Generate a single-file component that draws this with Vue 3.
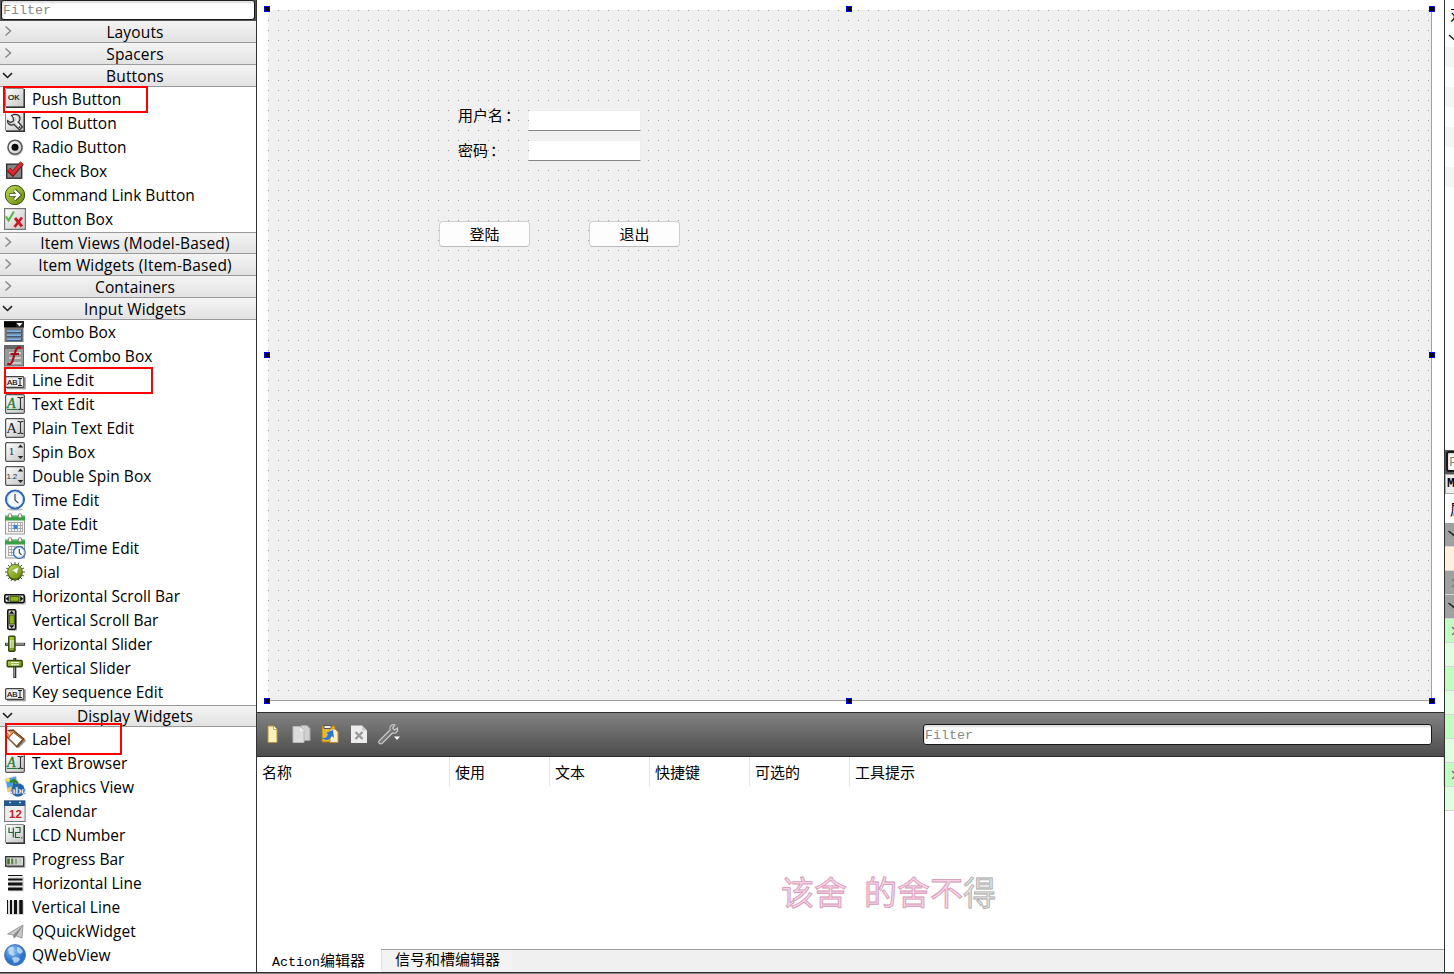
<script setup>
const tile = (inner) =>
  `<rect x="1.5" y=".5" width="18.5" height="18.5" rx="1" fill="url(#metal)" stroke="#8b8b8b"/><path d="M2 19.3H20.3V1" fill="none" stroke="#333" stroke-width="1.4"/>${inner}`
const frame = (inner) =>
  `<rect x="1.6" y="1.6" width="18.8" height="18.8" rx="1.5" fill="url(#metal)" stroke="#555" stroke-width="1.2"/>${inner}`
const t = (x, y, size, s, fill = '#111', extra = '') =>
  `<text x="${x}" y="${y}" font-size="${size}" fill="${fill}" ${extra}>${s}</text>`
const serif = 'font-family="Liberation Serif, serif"'
const beam = '<path d="M13.5 4.5h2l1 1 1-1h2M16.5 5.5v10M13.5 16.5h2l1-1 1 1h2" fill="none" stroke="#333" stroke-width="1.1"/>'
const arrows = '<path d="M16.5 3.5l2.7 3h-5.4zM16.5 18l2.7-3h-5.4z" fill="#222"/>'
const abi = `<path d="M3 19.5h18v-11" fill="none" stroke="#999" stroke-width="1.5"/><rect x="1.6" y="7.6" width="18.2" height="10.8" rx="1" fill="#eee" stroke="#444" stroke-width="1.2"/><text x="3" y="16" font-size="8" fill="#111" stroke="#111" stroke-width=".2" textLength="10.5" lengthAdjust="spacingAndGlyphs">AB</text><path d="M14 9.5h4M16 9.5v7M14 16.5h4" stroke="#222" fill="none"/>`
const calendar = `<rect x="1.5" y="3.5" width="19" height="17.5" fill="#f4f4f4" stroke="#999"/><path d="M1 2.5h20v5H1z" fill="#39a044"/><path d="M1 3h20" stroke="#7fd17f"/><rect x="4.5" y=".7" width="3" height="4" rx="1" fill="#eee" stroke="#888"/><rect x="14.5" y=".7" width="3" height="4" rx="1" fill="#eee" stroke="#888"/><path d="M4 9.5h15M4 12.5h15M4 15.5h15M4 18.5h15M4.5 9v10M7.5 9v10M10.5 9v10M13.5 9v10M16.5 9v10M18.5 9v10" stroke="#a5a5a5" stroke-width=".9"/>`
const clock = (cx, cy, r) =>
  `<circle cx="${cx}" cy="${cy}" r="${r}" fill="#f7fbff" stroke="#2f67b2" stroke-width="${r / 4.2}"/><circle cx="${cx}" cy="${cy}" r="${r * 0.84}" fill="none" stroke="#b9cfe8" stroke-width="1"/><path d="M${cx} ${cy - r * 0.6}v${r * 0.65}l${r * 0.38} ${r * 0.35}" fill="none" stroke="#444" stroke-width="1.2"/>`
const richText = frame(t(3, 14.5, 14, 'A', '#247a2f', serif + ' font-style="italic" stroke="#247a2f" stroke-width=".3"') + '<path d="M3 16.5h10" stroke="#247a2f"/>' + beam)

const icons = {
  push: tile(t(4, 11.5, 7, 'OK', '#111', 'stroke="#111" stroke-width=".2" textLength="11.5" lengthAdjust="spacingAndGlyphs"')),
  tool: tile('<path d="M7.5 3.5c4-2.5 9-.5 8.5 3.5-.2 1.5-1 2.400-1.700 3l4.200 5-3 3-5.500-5.500c-3.500 1.500-7-.5-6.500-4l3 2 3-1.500-.3-3.500z" fill="#ccc" stroke="#333" stroke-width="1.2"/><path d="M9 4.500c3-.5 5 1 4 4l-1.500 1.500 4 4.500" fill="none" stroke="#f8f8f8" stroke-width="1.4"/><circle cx="15.5" cy="15.2" r=".9" fill="#333"/>'),
  radio: '<circle cx="11.3" cy="12" r="8" fill="#999" opacity=".5"/><circle cx="11" cy="11.3" r="7" fill="url(#metal)" stroke="#5a5a5a" stroke-width="1.5"/><circle cx="11" cy="11.3" r="3.5" fill="#080808"/>',
  check: '<rect x="2.7" y="4.2" width="15" height="14" fill="#858585" stroke="#333" stroke-width="1.4"/><path d="M4.5 9.5l4.3 4.3L18 3" fill="none" stroke="#761116" stroke-width="4.6"/><path d="M4.8 9.3l4 4L18 2.8" fill="none" stroke="#e2292f" stroke-width="3"/>',
  command: '<circle cx="11" cy="11" r="9.7" fill="url(#green)" stroke="#395209"/><path d="M5.5 11h9M10.5 6.5l4.7 4.5-4.7 4.5" fill="none" stroke="#31480a" stroke-width="4"/><path d="M5.8 11h9M10.5 6.5l4.7 4.5-4.7 4.5" fill="none" stroke="#fff" stroke-width="2.3"/>',
  box: '<rect x=".6" y=".6" width="20.8" height="20.8" fill="url(#metal)" stroke="#777" stroke-width="1.2"/><path d="M2 8.5l2.5 4L10 3.5" fill="none" stroke="#55b947" stroke-width="2.2"/><path d="M11 10l7 8.5M18 9.5l-7.5 9.5" stroke="#c61c24" stroke-width="2.8"/>',
  combo: '<rect x=".5" y=".5" width="19" height="20.5" fill="#777"/><path d="M0 0h20v6.5H0z" fill="#222"/><path d="M0 1h12v5H0z" fill="#050505"/><path d="M12.5 2h6L15.5 5.6z" fill="#fff"/><path d="M3 10.5h15M3 14.5h15M3 18.5h15" stroke="#245286" stroke-width="2.4"/><path d="M3 10.2h14M3 14.2h14M3 18.2h14" stroke="#83b2e1" stroke-width="1.8"/>',
  font: '<rect x=".5" y=".5" width="19" height="20.5" fill="#999" stroke="#666"/><path d="M0 0h20v4H0z" fill="#666"/><path d="M5 8h12M5 13h12M5 18h12" stroke="#ccc" stroke-width="2"/><path d="M17 3.5c-3-2.500-5 0-6 4L8.500 16c-1 3-3 4-5 2.500M6.500 9h8.500" fill="none" stroke="#a60f17" stroke-width="2.2"/>',
  line: abi,
  rich: richText,
  plain: frame(t(2.3, 16, 15, 'A', '#222', serif) + beam),
  spin: frame(t(4.5, 13.5, 10, '1', '#333', 'font-family="DejaVu Serif, serif"') + arrows),
  double: frame(t(2.6, 13.5, 8, '1.2', '#333', 'textLength="10.5"') + arrows),
  time: '<ellipse cx="11" cy="20.5" rx="8" ry="1" fill="#bbb"/>' + clock(11, 10.5, 9),
  date: calendar + '<rect x="9.5" y="12" width="4" height="4" fill="#3684dd"/>',
  datetime: calendar + clock(15.3, 15.5, 5.8),
  dial: '<path d="M11 1v19.5M1 11h20M4 4l14 14M18 4L4 18M7 1.5l8 18M2 7l18 8M15 1.5L7 20M2 15l18-8" stroke="#555" stroke-width="1"/><circle cx="11" cy="12" r="7.5" fill="#365206"/><circle cx="11" cy="10.7" r="7.3" fill="url(#green)" stroke="#56770d"/><path d="M14.8 6l-2 7-2.2-2.2-3-1.4z" fill="#fff" stroke="#8ca94a" stroke-width=".5"/>',
  hscroll: '<path d="M2 19h19.5v-8" fill="none" stroke="#bbb"/><rect x=".8" y="9.8" width="19.4" height="7.8" rx="1" fill="#ddd" stroke="#111" stroke-width="1.6"/><rect x="6" y="11.3" width="9" height="5" fill="#92b51f" stroke="#385009"/><path d="M4.8 11v5.4l-3-2.7zM16.2 11v5.4l3-2.7z" fill="#111"/>',
  vscroll: '<path d="M5 21.5h7.5V2" fill="none" stroke="#bbb"/><rect x="3.8" y=".8" width="7.8" height="19.4" rx="1" fill="#ddd" stroke="#111" stroke-width="1.6"/><rect x="5.3" y="6" width="5" height="9" fill="#92b51f" stroke="#385009"/><path d="M5 4.8h5.4L7.7 1.8zM5 16.2h5.4L7.7 19.2z" fill="#111"/>',
  hslider: '<path d="M1 11.3h20" stroke="#333" stroke-width="3"/><path d="M2 11h18" stroke="#bbb" stroke-width="1.2"/><rect x="4.7" y="3.2" width="6.3" height="15" rx="1" fill="url(#green)" stroke="#33480b" stroke-width="1.4"/><path d="M6.8 7v8M9 7v8" stroke="#fff"/>',
  vslider: '<path d="M10.8 1v20" stroke="#333" stroke-width="3"/><path d="M10.5 2v18" stroke="#999"/><rect x="3.2" y="3.5" width="15" height="6.3" rx="1" fill="url(#green)" stroke="#33480b" stroke-width="1.4"/><path d="M7 5.6h8M7 7.8h8" stroke="#fff"/>',
  label: '<path d="M14 19.5l7.5-7.5" stroke="#999" stroke-width="2"/><path d="M2 3l7-1 11 9-7 8-11-11z" fill="#df9452" stroke="#6b4018" stroke-width="1.3"/><path d="M9.5 4.5l9 7-6 6.5-8-8z" fill="#fff" stroke="#7b4a1e"/><path d="M2 2l4 4" stroke="#fff" stroke-width="1.5"/>',
  graphics: '<path d="M1 3l11-3 3 12-11 4z" fill="#4d9de8" stroke="#ddd"/><path d="M3 12l11-3 1 4-11 3z" fill="#e4cf68"/><circle cx="4" cy="4" r="2" fill="#f4e33a"/><path d="M10 4v8M6 6l4-2 4 3" fill="none" stroke="#318321" stroke-width="2"/><circle cx="14" cy="14" r="6.8" fill="#2563a8"/>' + t(6, 18, 11, 'abc', '#fff', serif + ' font-weight="700" stroke="#577ba4" stroke-width=".3" textLength="16"'),
  cal: '<rect x=".6" y="1" width="20.5" height="20.5" fill="#eee" stroke="#777"/><path d="M0 .5h21v5.5H0z" fill="#24588c"/><path d="M5 2.5h2M15 2.5h2" stroke="#a8d6f5" stroke-width="1.5"/>' + t(5, 17.5, 11.5, '12', '#c32128', 'font-weight="700"'),
  lcd: tile('<path d="M5 3.5v5h4M9.3 3.5v10M11.5 3.5h4.5v5h-4.5v5H16" fill="none" stroke="#27602c" stroke-width="1.2"/><path d="M17 13.8h1.5" stroke="#27602c"/>'),
  progress: '<path d="M3 19.5h18v-10" fill="none" stroke="#bbb"/><rect x="1.7" y="8.7" width="18" height="9.5" fill="#ddd" stroke="#333" stroke-width="1.4"/><path d="M4.5 10.5v6" stroke="#416d21" stroke-width="2.5"/><path d="M8.2 10.5v6" stroke="#688851" stroke-width="2.5"/><path d="M12 10.5v6" stroke="#93a588" stroke-width="2.5"/><path d="M16 10.5v6" stroke="#bcc7b6" stroke-width="2.5"/>',
  hline: '<path d="M5 4.5h15v15H5z" fill="#ddd"/><path d="M4 3.5h14.5" stroke="#111"/><path d="M4 7.5h14.5" stroke="#111" stroke-width="2"/><path d="M4 12h14.5" stroke="#111" stroke-width="3"/><path d="M4 17h14.5" stroke="#111" stroke-width="3"/>',
  vline: '<path d="M4 5h16v14H4z" fill="#ddd"/><path d="M3.5 4v14" stroke="#111"/><path d="M7 4v14" stroke="#111" stroke-width="2"/><path d="M11.5 4v14" stroke="#111" stroke-width="3"/><path d="M17 4v14" stroke="#111" stroke-width="3.5"/>',
  quick: '<path d="M3.5 14L19 5l-1 13-5.5-2-2.5 2-.5-3z" fill="#c8c8c8" stroke="#8a8a8a" stroke-width=".8"/><path d="M19 5L9.5 15l.5 3 2.5-2z" fill="#8a8a8a"/>',
  web: '<circle cx="11" cy="11" r="10.5" fill="url(#globe)" stroke="#3c6aa7" stroke-width=".8"/><path d="M4 5c2-2.500 5-3 6-1l-1 4 2 2-2 2-4-2zM13 3c3 0 5 2 6 5l-3 2-3-2zM8 14c3-2 7-1 8 1-1 3-4 4-6 4z" fill="#c4e2fb" opacity=".8"/>',
}

const groups = [
  { name: 'Layouts', items: [] },
  { name: 'Spacers', items: [] },
  { name: 'Buttons', items: [['push', 'Push Button'], ['tool', 'Tool Button'], ['radio', 'Radio Button'], ['check', 'Check Box'], ['command', 'Command Link Button'], ['box', 'Button Box']] },
  { name: 'Item Views (Model-Based)', items: [] },
  { name: 'Item Widgets (Item-Based)', items: [] },
  { name: 'Containers', items: [] },
  { name: 'Input Widgets', items: [['combo', 'Combo Box'], ['font', 'Font Combo Box'], ['line', 'Line Edit'], ['rich', 'Text Edit'], ['plain', 'Plain Text Edit'], ['spin', 'Spin Box'], ['double', 'Double Spin Box'], ['time', 'Time Edit'], ['date', 'Date Edit'], ['datetime', 'Date/Time Edit'], ['dial', 'Dial'], ['hscroll', 'Horizontal Scroll Bar'], ['vscroll', 'Vertical Scroll Bar'], ['hslider', 'Horizontal Slider'], ['vslider', 'Vertical Slider'], ['line', 'Key sequence Edit']] },
  { name: 'Display Widgets', items: [['label', 'Label'], ['rich', 'Text Browser'], ['graphics', 'Graphics View'], ['cal', 'Calendar'], ['lcd', 'LCD Number'], ['progress', 'Progress Bar'], ['hline', 'Horizontal Line'], ['vline', 'Vertical Line'], ['quick', 'QQuickWidget'], ['web', 'QWebView']] },
]
const columns = ['使用', '文本', '快捷键', '可选的']
const properties = ['group open', 'cream', 'group closed', 'group open', 'g1 closed', 'g2', 'g1', 'g2', 'g1', 'g2', 'g1 closed', 'g2']
</script>

<template>
  <div class="window">
    <svg class="defs">
      <defs>
        <linearGradient id="metal" x2="1" y2="1"><stop stop-color="#fff" /><stop offset="1" stop-color="#c4c4c4" /></linearGradient>
        <linearGradient id="green" x2="1" y2="1"><stop stop-color="#c2dc58" /><stop offset="1" stop-color="#64850c" /></linearGradient>
        <radialGradient id="globe" cx=".4" cy=".3"><stop stop-color="#8fc4f6" /><stop offset="1" stop-color="#2f74c8" /></radialGradient>
      </defs>
    </svg>
    <div class="body">
      <aside class="sidebar">
        <div class="side-filter"><div class="filter">Filter</div></div>
        <section v-for="g in groups" :key="g.name" :class="{ open: g.items.length }">
          <header>
            <svg v-if="g.items.length" width="14" height="20"><path d="M3 7.2l4.5 4.3L12 7.2" fill="none" stroke="#222" stroke-width="1.6" /></svg>
            <svg v-else width="14" height="20"><path d="M5.5 4.5L10.5 9l-5 4.5" fill="none" stroke="#8a8a8a" stroke-width="1.5" /></svg>
            <span>{{ g.name }}</span>
          </header>
          <ul v-if="g.items.length">
            <li v-for="it in g.items" :key="it[1]">
              <svg class="icon" width="22" height="22" v-html="icons[it[0]]"></svg>
              <span>{{ it[1] }}</span>
            </li>
          </ul>
        </section>
        <i class="mark mark-push"></i>
        <i class="mark mark-line"></i>
        <i class="mark mark-label"></i>
      </aside>

      <main>
        <div class="canvas">
          <div class="form">
            <span class="w label-user">用户名<span class="colon">：</span></span>
            <span class="w label-pass">密码<span class="colon">：</span></span>
            <i class="w edit edit-user"></i>
            <i class="w edit edit-pass"></i>
            <button class="w btn-login">登陆</button>
            <button class="w btn-exit">退出</button>
          </div>
          <i v-for="n in 8" :key="n" class="handle" :class="'h' + n"></i>
        </div>
        <div class="toolbar">
          <svg width="150" height="43">
            <path d="M11 13h6l3 3v13.5h-9z" fill="#fbf1b7" stroke="#b5914a" /><path d="M16.5 13v3.5h3.5" fill="#fff" stroke="#c7a866" />
            <path d="M44 12.5h6l3 3v12h-9z" fill="#d0d0d0" stroke="#a7a7a7" /><path d="M36 13.5h7l4 4v12H36z" fill="#ddd" stroke="#b8b8b8" /><path d="M43 14v4h4" fill="#eee" />
            <path d="M65 13h13v16H65z" fill="#e8b832" stroke="#a87412" /><path d="M67 12.5h7v3h-7z" fill="#eee" stroke="#555" /><path d="M73 16h5l3 3v10.5h-8z" fill="#fff2c8" stroke="#c38d36" /><path d="M64 24c4 2 6 1 7-3l-2-1 7-3 1 8-2-2c-3 5-7 5-11 1z" fill="#2778d2" />
            <path d="M94 12.5h11l5 5v12.5H94z" fill="#ededed" /><path d="M105 12.5v5h5" fill="#ccc" /><path d="M98.5 19l7 7M105.5 19l-7 7" stroke="#999" stroke-width="2.3" />
            <path d="M122 28l11-11c-1-4 2-6 5-5l-2.500 3 2 2 3-2c1 4-2 6-5 5L125 30.500c-2 1-4-1-3-2.500z" fill="#777" stroke="#c9c9c9" stroke-width="1.2" /><path d="M137 23.5h6l-3 3.5z" fill="#fff" />
          </svg>
          <div class="filter">Filter</div>
        </div>
        <div class="table">
          <div class="thead">
            <span class="first">名称</span>
            <span v-for="c in columns" :key="c">{{ c }}</span>
            <span class="last">工具提示</span>
          </div>
          <div class="lyrics"><span>该舍</span><span class="next">的舍不</span><span class="dim">得</span></div>
        </div>
        <nav>
          <span class="tab active"><span class="latin">Action</span>编辑器</span>
          <span class="tab">信号和槽编辑器</span>
        </nav>
      </main>

      <aside class="right">
        <div class="objects">
          <span class="cut">对</span>
          <svg width="9" height="20"><path d="M4 8l5 4.5" fill="none" stroke="#222" stroke-width="1.5" /></svg>
          <i v-for="n in 7" :key="n"></i>
        </div>
        <div class="prop-filter"><div class="filter">Filter</div></div>
        <div class="object-name">M</div>
        <div class="prop-title">属性</div>
        <div v-for="(p, i) in properties" :key="i" class="prop" :class="p">
          <svg v-if="p.includes('open')" width="9" height="22"><path d="M3.5 8l6 5" fill="none" stroke="#222" stroke-width="1.6" /></svg>
          <svg v-else-if="p.includes('closed')" width="9" height="22"><path d="M7 8l4 4-4 4" fill="none" stroke="#777" stroke-width="1.5" /></svg>
        </div>
      </aside>
    </div>
    <footer></footer>
  </div>
</template>

<style>
body { margin: 0; overflow: hidden; background: #fff; }
</style>

<style scoped>
* { box-sizing: border-box; }
.window { width: 1454px; height: 974px; display: flex; flex-direction: column; overflow: hidden; background: #fff; color: #000; font: 15.5px "Open Sans", "Noto Sans", "Noto Sans CJK SC", sans-serif; }
.defs { position: absolute; width: 0; height: 0; }
.body { height: 972px; display: grid; grid-template-columns: 257px 1187px 10px; }
footer { height: 2px; background: #858585; border-top: 1px solid #2d2d2d; }
.filter { height: 21px; border: 1px solid #181818; border-radius: 3px; background: #fff; box-shadow: inset 1px 2px 2px #ddd; color: #888; font: 13.333px/21px "Liberation Mono", monospace; padding-left: 1px; overflow: hidden; }

.sidebar { position: relative; border-right: 1px solid #333; overflow: hidden; }
.side-filter { height: 21px; background: #555; padding: 0 1px 1px; }
.side-filter .filter { height: 20px; border-top: 1px solid #222; line-height: 20px; }
header { height: 22px; display: flex; align-items: center; border-bottom: 1px solid #999; background: linear-gradient(#f4f4f4, #e2e2e2); }
header span { flex: 1; text-align: center; line-height: 21px; padding-top: 1px; white-space: nowrap; letter-spacing: .14px; }
.open + section header { border-top: 1px solid #999; }
ul { margin: 0; padding: 0; list-style: none; }
.open ul { padding-bottom: 1px; }
section:last-child ul { padding-bottom: 0; }
li { height: 24px; display: flex; align-items: center; gap: 6px; padding-left: 4px; white-space: nowrap; line-height: 24px; letter-spacing: .02px; }
.icon { flex: none; font-family: "Liberation Sans", sans-serif; overflow: visible; letter-spacing: 0; }
.mark { position: absolute; border: 2px solid #f00; }
.mark-push { left: 3px; top: 86px; width: 145px; height: 27px; }
.mark-line { left: 4px; top: 367px; width: 149px; height: 27px; }
.mark-label { left: 5px; top: 723px; width: 117px; height: 32px; }

main { display: flex; flex-direction: column; overflow: hidden; }
.canvas { position: relative; height: 712px; padding: 10px 0 0 11px; }
.form { position: relative; width: 1164px; height: 691px; border-right: 1px solid #a0a0a0; border-bottom: 1px solid #a0a0a0; background: linear-gradient(90deg, transparent 1px, #f0f0f0 1px) 0 0 / 10px 10px, linear-gradient(#a0a0a0 1px, #f0f0f0 1px) 0 0 / 10px 10px; }
.w { position: absolute; font: 15px/22px "Noto Sans CJK SC", sans-serif; }
.label-user { left: 190px; top: 94px; }
.label-pass { left: 190px; top: 129px; }
.colon { margin-left: 2px; }
.edit { left: 261px; width: 112px; height: 21px; background: #fff; border: 1px solid #ececec; border-left: 0; border-bottom: 1px solid #868686; }
.edit-user { top: 100px; }
.edit-pass { top: 130px; }
button.w { top: 211px; width: 91px; height: 26px; padding: 0; border: 1px solid #d0d0d0; border-bottom-color: #bbb; border-radius: 4px; background: #fdfdfd; color: #000; }
.btn-login { left: 171px; }
.btn-exit { left: 321px; }
.handle { position: absolute; width: 6px; height: 6px; background: #000; border: 1px solid #00f; }
.h1, .h4, .h6 { left: 7px; }
.h2, .h7 { left: 589px; }
.h3, .h5, .h8 { left: 1172px; }
.h1, .h2, .h3 { top: 6px; }
.h4, .h5 { top: 352px; }
.h6, .h7, .h8 { top: 698px; }
.toolbar { height: 45px; display: flex; align-items: center; justify-content: space-between; padding-right: 12px; border-top: 1px solid #2d2d2d; border-bottom: 1px solid #2d2d2d; background: linear-gradient(#828282, #4d4d4d); }
.toolbar .filter { width: 509px; }
.table { height: 192px; }
.thead { display: flex; height: 30px; font: 15px/29px "Noto Sans CJK SC", sans-serif; }
.thead span { width: 100px; padding-left: 5px; border-right: 1px solid #e5e5e5; height: 29px; }
.thead .first { width: 193px; }
.thead .last { flex: 1; }
.lyrics { display: flex; margin: 80px 0 0 524px; font: 400 33px/48px "Noto Sans CJK SC", sans-serif; color: #fad3e6; -webkit-text-stroke: .8px #d296b5; }
.next { margin-left: 17px; }
.dim { color: #e2e2e2; -webkit-text-stroke-color: #aaa; }
nav { height: 23px; display: flex; background: #f0f0f0; border-top: 1px solid #a0a0a0; font: 15px/20px "Noto Sans CJK SC", sans-serif; }
.tab { padding: 0 12px 0 13px; height: 20px; border-left: 1px solid #ddd; background: #f3f3f3; line-height: 17px; white-space: nowrap; }
.tab.active { width: 124px; height: 23px; margin-top: -1px; padding: 0 0 0 15px; border: 0; background: #fff; line-height: 21px; }
.latin { font: 13.333px "Liberation Mono", monospace; }

.right { border-left: 1px solid #333; overflow: hidden; }
.objects { height: 450px; overflow: hidden; }
.cut { display: block; height: 27px; padding-left: 5px; font: 15px/27px "Noto Sans CJK SC", sans-serif; }
.objects svg { display: block; }
.objects i { display: block; height: 20px; }
.objects i:nth-of-type(odd) { background: #f5f5f5; }
.prop-filter { height: 24px; background: #555; padding: 1px 0 2px 1px; }
.prop-filter .filter { width: 100px; border-width: 2px; line-height: 20px; }
.object-name { height: 20px; border: 1px solid #aaa; border-right: 0; background: #eee; padding-left: 1px; font: bold 13px/18px "Liberation Mono", monospace; }
.prop-title { height: 29px; padding-left: 5px; font: 15px/29px "Noto Sans CJK SC", sans-serif; white-space: nowrap; overflow: hidden; }
.prop { height: 24px; border-bottom: 1px solid #d4d4d4; overflow: hidden; }
.group { background: #a0a0a0; }
.cream { background: #ffefdc; }
.g1 { background: #c0ffc0; }
.g2 { background: #dfffdf; }
</style>
